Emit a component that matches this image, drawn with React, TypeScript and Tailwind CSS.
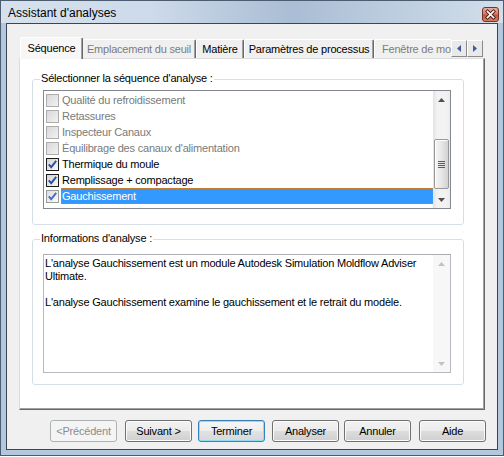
import React from 'react';

type CK = 'off' | 'on' | 'onDim';

function CheckBox({ kind }: { kind: CK }) {
  const cls =
    kind === 'on'
      ? 'border-[#1c1c1c] bg-[linear-gradient(135deg,#d4d4d4,#f8f8f8)]'
      : kind === 'onDim'
      ? 'border-[#9b9b9b] bg-[linear-gradient(135deg,#dedede,#fbfbfb)]'
      : 'border-[#adadad] bg-[linear-gradient(135deg,#d9d9d9,#f1f1f1)]';
  return (
    <div className={`w-[13px] h-[13px] shrink-0 border ${cls} flex items-center justify-center`}>
      {kind !== 'off' && (
        <svg width="11" height="11" viewBox="0 0 11 11">
          <path d="M1.8 5.3 L4.2 8.2 L9.2 1.8" fill="none" stroke={kind === 'on' ? '#2d4f9f' : '#4a6bc4'} strokeWidth="1.9" />
        </svg>
      )}
    </div>
  );
}

function Tri({ up, color }: { up: boolean; color: string }) {
  return (
    <svg width="7" height="4" viewBox="0 0 7 4">
      <path d={up ? 'M0 4 L3.5 0 L7 4 Z' : 'M0 0 L3.5 4 L7 0 Z'} fill={color} />
    </svg>
  );
}

function SideTri({ left }: { left: boolean }) {
  return (
    <svg width="4" height="7" viewBox="0 0 4 7">
      <path d={left ? 'M4 0 L0 3.5 L4 7 Z' : 'M0 0 L4 3.5 L0 7 Z'} fill="#3d5c9c" />
    </svg>
  );
}

const items: { label: string; kind: CK; enabled: boolean; selected?: boolean }[] = [
  { label: 'Qualité du refroidissement', kind: 'off', enabled: false },
  { label: 'Retassures', kind: 'off', enabled: false },
  { label: 'Inspecteur Canaux', kind: 'off', enabled: false },
  { label: "Équilibrage des canaux d'alimentation", kind: 'off', enabled: false },
  { label: 'Thermique du moule', kind: 'on', enabled: true },
  { label: 'Remplissage + compactage', kind: 'on', enabled: true },
  { label: 'Gauchissement', kind: 'onDim', enabled: true, selected: true },
];

function Btn({ children, variant, className }: { children: React.ReactNode; variant: 'normal' | 'focus' | 'disabled'; className: string }) {
  const v =
    variant === 'disabled'
      ? 'border-[#adb2b5] bg-[#f4f4f4] text-[#8c8c8c]'
      : variant === 'focus'
      ? 'border-[#3c7fb1] bg-[linear-gradient(#f6f6f6_0%,#eeeeee_50%,#e2e2e2_50%,#d8d8d8_100%)] shadow-[inset_0_0_0_1px_#8fdcf7] text-black'
      : 'border-[#707070] bg-[linear-gradient(#f2f2f2_0%,#ebebeb_50%,#dddddd_50%,#cfcfcf_100%)] shadow-[inset_0_0_0_1px_#fbfbfb] text-black';
  return (
    <div className={`h-[22px] w-[67px] shrink-0 rounded-[3px] border flex items-center justify-center leading-[13px] ${v} ${className}`}>
      {children}
    </div>
  );
}

export default function App() {
  return (
    <div className="w-[504px] h-[457px] bg-white font-['Liberation_Sans',Arial,sans-serif] text-[11px] tracking-[-0.2px] text-black">
      <div className="w-[504px] h-[456px] border border-[#4d5d70] bg-[#b3c7de] flex flex-col">
        {/* title bar */}
        <div className="h-[22px] shrink-0 flex items-start pl-[7px] pr-[4px] bg-[linear-gradient(90deg,#d6e1ed_0%,#cddaea_30%,#a9bdd4_58%,#bccddf_78%,#d2deea_100%)]">
          <span className="flex-1 mt-[5px] text-[12px] leading-[14px] tracking-normal">Assistant d'analyses</span>
          <svg className="mt-[6px]" width="17" height="15" viewBox="0 0 17 15">
            <defs>
              <linearGradient id="cg" x1="0" y1="0" x2="0" y2="1">
                <stop offset="0" stopColor="#eab2a4" />
                <stop offset="0.48" stopColor="#d37a68" />
                <stop offset="0.52" stopColor="#c2503a" />
                <stop offset="1" stopColor="#d98466" />
              </linearGradient>
            </defs>
            <rect x="0.5" y="0.5" width="16" height="14" rx="2.5" fill="url(#cg)" stroke="#7a3226" />
            <path d="M5.5 4.5 L11.5 10.5 M11.5 4.5 L5.5 10.5" stroke="#4a1f18" strokeWidth="3.4" strokeLinecap="square" />
            <path d="M5.5 4.5 L11.5 10.5 M11.5 4.5 L5.5 10.5" stroke="#ffffff" strokeWidth="1.7" strokeLinecap="square" />
          </svg>
        </div>
        {/* frame + client */}
        <div className="flex-1 px-[5px] pb-[5px] flex">
          <div className="flex-1 border border-[#3c4652] bg-[#f0f0f0] flex flex-col">
            {/* tab row */}
            <div className="mt-[13px] ml-[12px] w-[466px] h-[22px] relative z-10 flex">
              <div className="w-[432px] pl-[1px] h-[22px] flex items-end overflow-hidden">
                <div className="w-[63px] h-[22px] shrink-0 rounded-t-[2px] border-l border-t border-r border-l-white border-t-white border-r-[#696969] shadow-[inset_-1px_0_0_#a0a0a0] bg-[#f7f7f7] flex items-center justify-center pb-[1px]">
                  Séquence
                </div>
                <div className="w-[113px] h-[19px] mb-[1px] shrink-0 rounded-t-[2px] border-t border-r border-t-white border-r-[#696969] shadow-[inset_-1px_0_0_#a0a0a0] bg-[#f0f0f0] flex items-center justify-center text-[#7c7c7c]">
                  Emplacement du seuil
                </div>
                <div className="w-[48px] h-[19px] mb-[1px] shrink-0 rounded-t-[2px] border-l border-t border-r border-l-white border-t-white border-r-[#696969] shadow-[inset_-1px_0_0_#a0a0a0] bg-[#f0f0f0] flex items-center justify-center">
                  Matière
                </div>
                <div className="w-[130px] h-[19px] mb-[1px] shrink-0 rounded-t-[2px] border-l border-t border-r border-l-white border-t-white border-r-[#696969] shadow-[inset_-1px_0_0_#a0a0a0] bg-[#f0f0f0] flex items-center justify-center">
                  Paramètres de processus
                </div>
                <div className="w-[80px] h-[19px] mb-[1px] shrink-0 rounded-t-[2px] border-l border-t border-l-white border-t-white bg-[#f0f0f0] flex items-center pl-[7px] text-[#7c7c7c] whitespace-nowrap">
                  Fenêtre de mo
                </div>
              </div>
              <div className="mt-[3px] flex h-[17px]">
                <div className="w-[16px] h-[17px] border border-t-white border-l-white border-r-[#8a8a8a] border-b-[#8a8a8a] bg-[#e9e9e9] flex items-center justify-center">
                  <SideTri left />
                </div>
                <div className="w-[16px] h-[17px] border border-t-white border-l-white border-r-[#8a8a8a] border-b-[#8a8a8a] bg-[#e9e9e9] flex items-center justify-center">
                  <SideTri left={false} />
                </div>
              </div>
            </div>
            {/* panel */}
            <div className="-mt-[1px] ml-[12px] w-[466px] h-[352px] shrink-0 bg-white border border-t-[#dcdcdc] border-l-[#dcdcdc] border-r-[#696969] border-b-[#696969] shadow-[inset_-1px_-1px_0_#a0a0a0] flex flex-col">
              {/* group 1 */}
              <div className="mt-[20px] ml-[12px] w-[432px] h-[146px] shrink-0 relative border border-[#d5dfe5] rounded-[3px]">
                <span className="absolute left-[7px] -top-[8px] bg-white px-[1px] leading-[13px]">Sélectionner la séquence d'analyse :</span>
                <div className="mt-[10px] ml-[10px] w-[408px] h-[119px] border border-[#828790] flex">
                  <div className="flex-1 pt-[1px] flex flex-col">
                    {items.map((it) => (
                      <div key={it.label} className="h-[16px] flex items-center">
                        <div className="ml-[2px]">
                          <CheckBox kind={it.kind} />
                        </div>
                        <div
                          className={
                            it.selected
                              ? 'ml-[2px] flex-1 h-[16px] pl-[1px] leading-[16px] bg-[#3399ff] text-white outline outline-1 outline-dotted outline-[#c98235] -outline-offset-1'
                              : it.enabled
                              ? 'ml-[2px] flex-1 h-[16px] pl-[1px] leading-[16px] text-black'
                              : 'ml-[2px] flex-1 h-[16px] pl-[1px] leading-[16px] text-[#7a7a7a]'
                          }
                        >
                          {it.label}
                        </div>
                      </div>
                    ))}
                  </div>
                  <div className="w-[17px] flex flex-col bg-[linear-gradient(90deg,#e3e3e3,#f2f2f2_25%,#f2f2f2_75%,#ececec)]">
                    <div className="h-[17px] flex items-center justify-center">
                      <Tri up color="#505050" />
                    </div>
                    <div className="flex-1 flex flex-col items-center">
                      <div className="mt-[31px] w-[15px] h-[50px] rounded-[2px] border border-[#989898] bg-[linear-gradient(90deg,#f5f5f5,#e6e6e6_50%,#d2d2d2)] shadow-[inset_1px_1px_0_#ffffff] flex flex-col items-center justify-center gap-[1px]">
                        <div className="w-[7px] h-[1px] bg-[#5c5c5c]" />
                        <div className="w-[7px] h-[1px] bg-[#5c5c5c]" />
                        <div className="w-[7px] h-[1px] bg-[#5c5c5c]" />
                        <div className="w-[7px] h-[1px] bg-[#5c5c5c]" />
                      </div>
                    </div>
                    <div className="h-[17px] flex items-center justify-center">
                      <Tri up={false} color="#505050" />
                    </div>
                  </div>
                </div>
              </div>
              {/* group 2 */}
              <div className="mt-[14px] ml-[12px] w-[432px] h-[146px] shrink-0 relative border border-[#d5dfe5] rounded-[3px]">
                <span className="absolute left-[7px] -top-[8px] bg-white px-[1px] leading-[13px]">Informations d'analyse :</span>
                <div className="mt-[14px] ml-[10px] w-[408px] h-[119px] border border-[#b5b8bf] border-t-[#abadb3] flex">
                  <div className="flex-1 pl-[1px] pt-[2px] leading-[13px] whitespace-nowrap">
                    <div>L'analyse Gauchissement est un module Autodesk Simulation Moldflow Adviser</div>
                    <div>Ultimate.</div>
                    <div className="h-[13px]" />
                    <div>L'analyse Gauchissement examine le gauchissement et le retrait du modèle.</div>
                  </div>
                  <div className="w-[17px] flex flex-col bg-[#f7f7f7]">
                    <div className="h-[17px] flex items-center justify-center">
                      <Tri up color="#c2c2c2" />
                    </div>
                    <div className="flex-1" />
                    <div className="h-[17px] flex items-center justify-center">
                      <Tri up={false} color="#c2c2c2" />
                    </div>
                  </div>
                </div>
              </div>
            </div>
            {/* buttons */}
            <div className="mt-[10px] h-[22px] flex">
              <Btn variant="disabled" className="ml-[43px]">&lt;Précédent</Btn>
              <Btn variant="normal" className="ml-[8px]">Suivant &gt;</Btn>
              <Btn variant="focus" className="ml-[6px]">Terminer</Btn>
              <Btn variant="normal" className="ml-[7px]">Analyser</Btn>
              <Btn variant="normal" className="ml-[5px]">Annuler</Btn>
              <Btn variant="normal" className="ml-[8px]">Aide</Btn>
            </div>
          </div>
        </div>
      </div>
    </div>
  );
}
